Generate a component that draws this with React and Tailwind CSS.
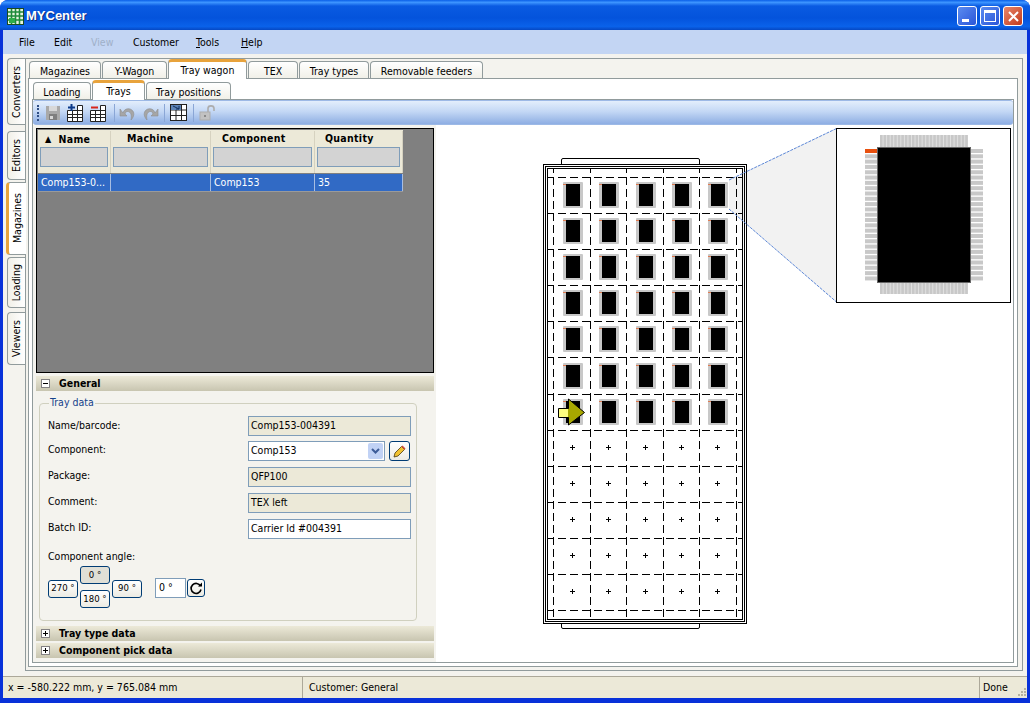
const tabFrame = 'flex items-center justify-center rounded-t-[4px] border border-b-0 border-[#919b9c] text-[10.5px] text-black';

function OuterTab({ label, width, active }) {
  if (active) {
    return (
      <div className={`${width} relative z-10 -mt-[2px] -mb-px flex h-[20px] items-start justify-center rounded-t-[4px] border-x border-[#919b9c] border-t-[3px] border-t-[#e8a33c] bg-white pt-[1px] text-[10.5px] text-black`}>
        {label}
      </div>
    );
  }
  return <div className={`${width} ${tabFrame} h-[17px] bg-[linear-gradient(#ffffff,#f1f0e8)] pt-[3px]`}>{label}</div>;
}

function SideTab({ label, height, active }) {
  return (
    <div
      className={
        active
          ? `${height} relative z-10 -mr-px flex w-[20px] items-center justify-center rounded-l-[4px] border-l-[3px] border-y border-l-[#e8a33c] border-y-[#919b9c] bg-white text-[10.5px] text-black`
          : `${height} ml-[1px] flex w-[18px] items-center justify-center rounded-l-[4px] border border-r-0 border-[#919b9c] bg-[linear-gradient(90deg,#f1f0e8,#ffffff)] text-[10.5px] text-black`
      }
    >
      <span className="rotate-180 [writing-mode:vertical-rl]">{label}</span>
    </div>
  );
}

function AppIcon() {
  return (
    <svg width="17" height="17" viewBox="0 0 17 17" className="shrink-0">
      <rect x="0.5" y="0.5" width="16" height="16" fill="#e8f4e0" stroke="#1c4a20" />
      <path d="M1 4h15M1 8h15M1 12h15M4.5 1v15M8.5 1v15M12.5 1v15" stroke="#1f8a3a" strokeWidth="1.6" />
      <rect x="2" y="10" width="6" height="5" fill="#2fae4a" />
    </svg>
  );
}

function Floppy() {
  return (
    <svg width="16" height="16" viewBox="0 0 16 16">
      <rect x="1" y="1" width="14" height="14" fill="#a9a9a9" />
      <rect x="4" y="1" width="8" height="5" fill="#d8d8d8" />
      <rect x="4" y="9" width="8" height="6" fill="#7f7f7f" />
      <rect x="5" y="11" width="3" height="3" fill="#d8d8d8" />
    </svg>
  );
}

function TrayIcon({ sign }) {
  return (
    <svg width="16" height="18" viewBox="0 0 16 18">
      <rect x="0.5" y="6.5" width="15" height="11" fill="#fff" />
      <rect x="10.5" y="1.5" width="5" height="5" fill="#fff" />
      <path d="M0.5 6.5h15M0.5 10.5h15M0.5 13.5h15M0.5 17.5h15M0.5 6.5v11M5.5 6.5v11M10.5 1.5v16M15.5 1.5v16M10.5 1.5h5" stroke="#222" fill="none" />
      {sign === 'plus' ? (
        <path d="M1 3.5h7M4.5 0v7" stroke="#0b3a8a" strokeWidth="2" />
      ) : (
        <path d="M1 3.5h7" stroke="#d8261c" strokeWidth="2" />
      )}
    </svg>
  );
}

function UndoIcon({ flip }) {
  return (
    <svg width="17" height="16" viewBox="0 0 17 16" className={flip ? '-scale-x-100' : ''}>
      <path d="M4 8 C5 3 12 2 14.5 7 C15.5 10 14 13 12 15 C13 11 12 7 9 6.5 C7.5 6.3 6.5 7 6 9 L8 11 L1 11 L1 4 Z" fill="#a6a6a6" stroke="#8f8f8f" strokeWidth="0.6" />
    </svg>
  );
}

function MoveTrayIcon() {
  return (
    <svg width="17" height="17" viewBox="0 0 17 17">
      <rect x="0.5" y="0.5" width="16" height="16" fill="#fff" stroke="#222" />
      <path d="M0 6h17M0 11.5h17M6 0v17M11.5 0v17" stroke="#222" />
      <rect x="1" y="1" width="10" height="5" fill="#5d84b8" />
      <path d="M3 2l6 3M9 2v3H6" stroke="#12315f" fill="none" />
    </svg>
  );
}

function LockIcon() {
  return (
    <svg width="17" height="17" viewBox="0 0 17 17">
      <rect x="1" y="8" width="10" height="8" fill="#c2c2c2" stroke="#adadad" />
      <path d="M9 8V4.5C9 1 15 1 15 4.5V7" fill="none" stroke="#adadad" strokeWidth="1.6" />
      <rect x="5" y="11" width="2" height="2" fill="#8a8a8a" />
    </svg>
  );
}

function Toolbar() {
  return (
    <div className="flex h-[25px] shrink-0 items-center rounded-[3px] border-y border-[#9db9e6] bg-[linear-gradient(#e3eefc,#c4d8f5_45%,#8eaee3)] pl-[4px]">
      <div className="mr-[3px] flex h-[16px] w-[2px] flex-col justify-between">
        {[0, 1, 2, 3, 4].map((i) => (
          <span key={i} className="h-[2px] w-[2px] bg-[#2f4f86]" />
        ))}
      </div>
      <div className="flex w-[22px] justify-center"><Floppy /></div>
      <div className="flex w-[22px] justify-center"><TrayIcon sign="plus" /></div>
      <div className="flex w-[24px] justify-center"><TrayIcon sign="minus" /></div>
      <span className="ml-[4px] mr-[2px] h-[18px] w-px bg-[#8aa6d6]" />
      <div className="flex w-[20px] justify-center"><UndoIcon /></div>
      <div className="flex w-[27px] justify-center"><UndoIcon flip /></div>
      <span className="mr-[2px] h-[18px] w-px bg-[#8aa6d6]" />
      <div className="flex w-[22px] justify-center"><MoveTrayIcon /></div>
      <span className="ml-[4px] mr-[2px] h-[18px] w-px bg-[#8aa6d6]" />
      <div className="flex w-[22px] justify-center"><LockIcon /></div>
    </div>
  );
}

const columns = [
  { title: 'Name', width: 'w-[73px]', pad: 'pl-[5px] pt-[2px]', cell: 'Comp153-0...', sorted: true },
  { title: 'Machine', width: 'w-[100px]', pad: 'pl-[14px]', cell: '' },
  { title: 'Component', width: 'w-[104px]', pad: 'pl-[9px]', cell: 'Comp153' },
  { title: 'Quantity', width: 'w-[88px]', pad: 'pl-[8px]', cell: '35' },
];

function TrayGrid() {
  return (
    <div className="h-[245px] border border-black bg-[#808080] p-px">
      <div className="w-[365px]">
        <div className="flex h-[43px] bg-[#ece9d8] pt-px">
          {columns.map((c) => (
            <div key={c.title} className={`${c.width} flex flex-col border-r border-[#d6d2c0] px-[2px]`}>
              <div className={`flex h-[16px] items-center text-[10.5px] font-bold tracking-[0.3px] text-black ${c.pad}`}>
                {c.sorted && <span className="mr-[7px] text-[9px]">▲</span>}
                {c.title}
              </div>
              <div className="h-[20px] border border-[#7f9db9] bg-[#d3d3d3]" />
            </div>
          ))}
        </div>
        <div className="mt-px flex h-[18px] border-b border-[#9a9a9a] bg-[#316ac5]">
          {columns.map((c) => (
            <div key={c.title} className={`${c.width} flex items-center border-r border-[#a7bde2] pl-[3px] text-[10.5px] text-white`}>
              {c.cell}
            </div>
          ))}
        </div>
      </div>
    </div>
  );
}

function SectionHeader({ title, open }) {
  return (
    <div className="flex h-[15px] items-center bg-[linear-gradient(#ece9d8,#c8c5b0)] pl-[5px] text-[10.5px] font-bold text-black">
      <span className="flex h-[9px] w-[9px] items-center justify-center border border-[#848284] bg-white">
        <svg width="7" height="7" viewBox="0 0 7 7">
          <path d={open ? 'M1 3.5h5' : 'M1 3.5h5M3.5 1v5'} stroke="#000" />
        </svg>
      </span>
      <span className="ml-[9px]">{title}</span>
    </div>
  );
}

function Field({ label, value, readOnly, rowHeight = 'h-[26px]', labelTop = 'mt-0' }) {
  return (
    <div className={`flex ${rowHeight} items-start`}>
      <span className={`${labelTop} w-[200px] shrink-0 text-[10.5px] leading-[16px] text-black`}>{label}</span>
      <div className={`flex h-[20px] w-[163px] shrink-0 items-center border border-[#7f9db9] pl-[2px] text-[10.5px] text-black ${readOnly ? 'bg-[#ece9d8]' : 'bg-white'}`}>
        {value}
      </div>
    </div>
  );
}

function AngleButton({ label, pressed }) {
  return (
    <div className={`flex h-[18px] w-[30px] items-center justify-center rounded-[3px] border border-[#003c74] text-[9.5px] text-black ${pressed ? 'bg-[#e0dfd6]' : 'bg-[linear-gradient(#ffffff,#ecebe3)]'}`}>
      {label}
    </div>
  );
}

function FormPanel() {
  return (
    <div className="mx-[3px] mt-[12px] h-[218px] w-[378px] rounded-[4px] border border-[#d0d0bf] pl-[8px] pr-[5px]">
      <div className="-mt-[9px] ml-[1px] w-fit bg-[#f4f3ee] px-px text-[10.5px] leading-[15px] text-[#15428b]">Tray data</div>
      <div className="mt-[6px]">
        <Field label="Name/barcode:" value="Comp153-004391" readOnly rowHeight="h-[25px]" labelTop="mt-px" />
        <div className="flex h-[26px] items-start">
          <span className="w-[200px] shrink-0 text-[10.5px] leading-[16px] text-black">Component:</span>
          <div className="flex h-[20px] w-[137px] shrink-0 items-center justify-between border border-[#7f9db9] bg-white pl-[2px] text-[10.5px] text-black">
            Comp153
            <span className="mr-px flex h-[16px] w-[15px] items-center justify-center rounded-[2px] bg-[#c1d2f5]">
              <svg width="9" height="6" viewBox="0 0 9 6"><path d="M1 1l3.5 3.5L8 1" fill="none" stroke="#3d5c98" strokeWidth="2" /></svg>
            </span>
          </div>
          <div className="ml-[4px] flex h-[20px] w-[21px] shrink-0 items-center justify-center rounded-[3px] border border-[#003c74] bg-[linear-gradient(#ffffff,#ecebe3)]">
            <svg width="13" height="13" viewBox="0 0 13 13">
              <path d="M1 12l1-4 6.5-6.5 3 3L5 11z" fill="#f2c230" stroke="#4a3a10" strokeWidth="0.8" />
              <path d="M8.5 1.5l3 3 1-1-3-3z" fill="#d84a3a" />
            </svg>
          </div>
        </div>
        <Field label="Package:" value="QFP100" readOnly />
        <Field label="Comment:" value="TEX left" readOnly />
        <Field label="Batch ID:" value="Carrier Id #004391" />
      </div>
      <div className="mt-[4px] text-[10.5px] leading-[14px] text-black">Component angle:</div>
      <div className="mt-[3px] flex items-center">
        <div className="mt-[3px]"><AngleButton label="270 °" /></div>
        <div className="mx-[2px] flex h-[42px] flex-col justify-between">
          <AngleButton label="0 °" pressed />
          <AngleButton label="180 °" />
        </div>
        <div className="mt-[3px]"><AngleButton label="90 °" /></div>
        <div className="ml-[13px] mt-[2px] flex h-[20px] w-[31px] items-center border border-[#7f9db9] bg-white pl-[3px] text-[10.5px] text-black">0 °</div>
        <div className="ml-px mt-[2px] flex h-[18px] w-[18px] items-center justify-center rounded-[3px] border border-[#003c74] bg-[linear-gradient(#ffffff,#ecebe3)]">
          <svg width="14" height="14" viewBox="0 0 14 14">
            <path d="M11.5 5A5 5 0 1 0 12 8.5" fill="none" stroke="#000" strokeWidth="1.6" />
            <path d="M9 5.5h4V1.5z" fill="#000" />
          </svg>
        </div>
      </div>
    </div>
  );
}

const colX = [573, 609, 646, 682, 718];
const vDash = [553.5, 590.5, 626.5, 663.5, 699.5, 736.5];
const hDash = [177.5, 213.5, 249.5, 285.5, 321.5, 357.5, 394.5, 430.5, 466.5, 502.5, 538.5, 574.5, 610.5];
const rowY = (n) => Math.round(195 + n * 36.1);

function Chip({ cx, cy }) {
  return (
    <g>
      <rect x={cx - 10} y={cy - 13} width="20" height="26" rx="1" fill="#c8c8c8" />
      <rect x={cx - 7} y={cy - 11} width="14" height="22" fill="#000" />
      <rect x={cx - 10} y={cy - 11} width="3" height="1" fill="#e07a50" />
    </g>
  );
}

function TrayDrawing() {
  const pins = Array.from({ length: 25 }, (_, i) => i);
  return (
    <svg width="577" height="534" viewBox="436 125 577 534" className="block">
      <path d="M729 180 L836.5 128.5 L836.5 302 L729 209 Z" fill="#f2f2f2" />
      <path d="M561.5 164 V160 Q561.5 158.5 563 158.5 H698 Q699.5 158.5 699.5 160 V164" fill="#fff" stroke="#000" />
      <path d="M561.5 623 V627 Q561.5 628.5 563 628.5 H698 Q699.5 628.5 699.5 627 V623" fill="#fff" stroke="#000" />
      <rect x="543.5" y="164.5" width="203" height="459" fill="none" stroke="#000" />
      <rect x="545.5" y="166.5" width="199" height="455" fill="none" stroke="#000" />
      <rect x="547.5" y="168.5" width="195" height="451" fill="none" stroke="#000" />
      {vDash.map((x) => (
        <path key={x} d={`M${x} 168 V620`} stroke="#000" strokeDasharray="8 4" strokeDashoffset="3" />
      ))}
      {hDash.map((y) => (
        <path key={y} d={`M548 ${y} H743`} stroke="#000" strokeDasharray="8 4" strokeDashoffset="2" />
      ))}
      {[0, 1, 2, 3, 4, 5, 6].map((r) => colX.map((x) => <Chip key={`${r}-${x}`} cx={x} cy={rowY(r)} />))}
      {[7, 8, 9, 10, 11].map((r) =>
        colX.map((x) => (
          <path key={`${r}-${x}`} d={`M${x - 3} ${rowY(r) - 0.5} h5 M${x - 0.5} ${rowY(r) - 3} v5`} stroke="#000" />
        ))
      )}
      <path d="M558.5 408.5 H568.5 V399 L584.5 412.5 L568.5 425 V417.5 H558.5 Z" fill="#a8a800" stroke="#000" />
      <rect x="559" y="409" width="9" height="8" fill="#ffff80" />
      <path d="M729 180 L836.5 128.5 M729 209 L836.5 302" stroke="#5b86d6" strokeDasharray="3 1" fill="none" />
      <rect x="836.5" y="128.5" width="174" height="174" fill="#fff" stroke="#000" />
      <rect x="880" y="135" width="88" height="12" fill="#e2e2e2" />
      <rect x="880" y="283" width="88" height="11" fill="#e2e2e2" />
      <rect x="877.5" y="147.5" width="93" height="135" fill="#000" stroke="#666" />
      {pins.map((i) => (
        <g key={i} fill="#c8c8c8">
          <rect x={880 + i * 3.55} y="135" width="2.6" height="12" />
          <rect x={880 + i * 3.55} y="283" width="2.6" height="11" />
          <rect x="865" y={149 + i * 5.31} width="12" height="4" fill={i === 0 ? '#e8500f' : '#c8c8c8'} />
          <rect x="971" y={149 + i * 5.31} width="12" height="4" />
        </g>
      ))}
    </svg>
  );
}

export default function App() {
  return (
    <div className="flex h-[703px] w-[1030px] flex-col overflow-hidden rounded-t-[8px] bg-[#0831d9] font-['DejaVu_Sans_Condensed','Liberation_Sans',Arial,sans-serif]">
      <div className="flex h-[30px] shrink-0 items-center bg-[linear-gradient(#0a5fe8,#3d95ff_8%,#0a5be2_20%,#0453dc_60%,#0a62ea_88%,#0548c4)] pl-[7px] pr-[7px] pt-[2px]">
        <AppIcon />
        <span className="ml-[2px] font-['Liberation_Sans',Arial,sans-serif] text-[13px] font-bold text-white [text-shadow:1px_1px_#0f2f7f]">MYCenter</span>
        <div className="ml-auto flex gap-[3px]">
          <div className="flex h-[20px] w-[20px] items-end rounded-[3px] border border-white bg-[linear-gradient(135deg,#5b8cf0,#2a55d8)] pb-[3px] pl-[4px]">
            <span className="h-[3px] w-[7px] bg-white" />
          </div>
          <div className="flex h-[20px] w-[20px] items-center justify-center rounded-[3px] border border-white bg-[linear-gradient(135deg,#5b8cf0,#2a55d8)]">
            <span className="h-[12px] w-[12px] border border-t-[3px] border-white" />
          </div>
          <div className="flex h-[20px] w-[20px] items-center justify-center rounded-[3px] border border-white bg-[linear-gradient(135deg,#e8866a,#c23a1c)]">
            <svg width="11" height="11" viewBox="0 0 11 11"><path d="M1 1l9 9M10 1l-9 9" stroke="#fff" strokeWidth="2" /></svg>
          </div>
        </div>
      </div>
      <div className="flex min-h-0 flex-1 flex-col px-[3px] pb-[5px]">
        <div className="flex h-[24px] shrink-0 items-center bg-[#c3d5f3] pl-[16px] pt-px text-[10.5px] text-black">
          <span className="w-[35px]">File</span>
          <span className="w-[37px]">Edit</span>
          <span className="w-[42px] text-[#9fb0c8]">View</span>
          <span className="w-[63px]">Customer</span>
          <span className="w-[45px]"><u>T</u>ools</span>
          <span><u>H</u>elp</span>
        </div>
        <div className="flex min-h-0 flex-1 bg-[#f4f3ee] pl-[3px] pt-[4px]">
          <div className="flex w-[19px] shrink-0 flex-col">
            <SideTab label="Converters" height="h-[67px]" />
            <div className="h-[6px]" />
            <SideTab label="Editors" height="h-[49px]" />
            <div className="h-[2px]" />
            <SideTab label="Magazines" active height="h-[73px]" />
            <div className="h-[2px]" />
            <SideTab label="Loading" height="h-[51px]" />
            <div className="h-[4px]" />
            <SideTab label="Viewers" height="h-[53px]" />
          </div>
          <div className="flex h-[613px] w-[998px] flex-col border border-[#919b9c] bg-[#f4f3ee] pl-[2px] pr-[4px]">
            <div className="flex h-[19px] shrink-0 items-end gap-px pl-px">
              <OuterTab label="Magazines" width="w-[72px]" />
              <OuterTab label="Y-Wagon" width="w-[65px]" />
              <OuterTab label="Tray wagon" width="w-[79px]" active />
              <OuterTab label="TEX" width="w-[50px]" />
              <OuterTab label="Tray types" width="w-[70px]" />
              <OuterTab label="Removable feeders" width="w-[113px]" />
            </div>
            <div className="flex h-[589px] flex-col border border-[#919b9c] bg-white pl-[3px] pr-[3px]">
              <div className="flex h-[20px] shrink-0 items-end gap-px pl-px">
                <OuterTab label="Loading" width="w-[58px]" />
                <OuterTab label="Trays" width="w-[53px]" active />
                <OuterTab label="Tray positions" width="w-[85px]" />
              </div>
              <div className="flex h-[564px] flex-col border border-[#919b9c] bg-white">
                <Toolbar />
                <div className="flex min-h-0 flex-1">
                  <div className="w-[403px] shrink-0 bg-[#f4f3ee] pl-[3px] pr-[2px] pt-[3px]">
                    <TrayGrid />
                    <div className="mt-[3px]">
                      <SectionHeader title="General" open />
                    </div>
                    <FormPanel />
                    <div className="mt-[5px]"><SectionHeader title="Tray type data" /></div>
                    <div className="mt-[2px]"><SectionHeader title="Component pick data" /></div>
                  </div>
                  <TrayDrawing />
                </div>
              </div>
            </div>
          </div>
        </div>
        <div className="flex h-[22px] shrink-0 items-center border-t border-[#aca899] bg-[#ece9d8] text-[10.5px] text-black">
          <span className="w-[299px] pl-[5px]">x = -580.222 mm, y = 765.084 mm</span>
          <span className="flex h-full flex-1 items-center border-l border-[#aca899] pl-[6px]">Customer: General</span>
          <span className="flex h-full w-[48px] items-center border-l border-[#aca899] pl-[3px]">
            Done
            <svg width="10" height="10" viewBox="0 0 10 10" className="ml-auto mt-auto mb-px">
              <path d="M7 1h2v2H7zM4 4h2v2H4zM7 4h2v2H7zM1 7h2v2H1zM4 7h2v2H4zM7 7h2v2H7z" fill="#b5b2a0" />
            </svg>
          </span>
        </div>
      </div>
    </div>
  );
}
